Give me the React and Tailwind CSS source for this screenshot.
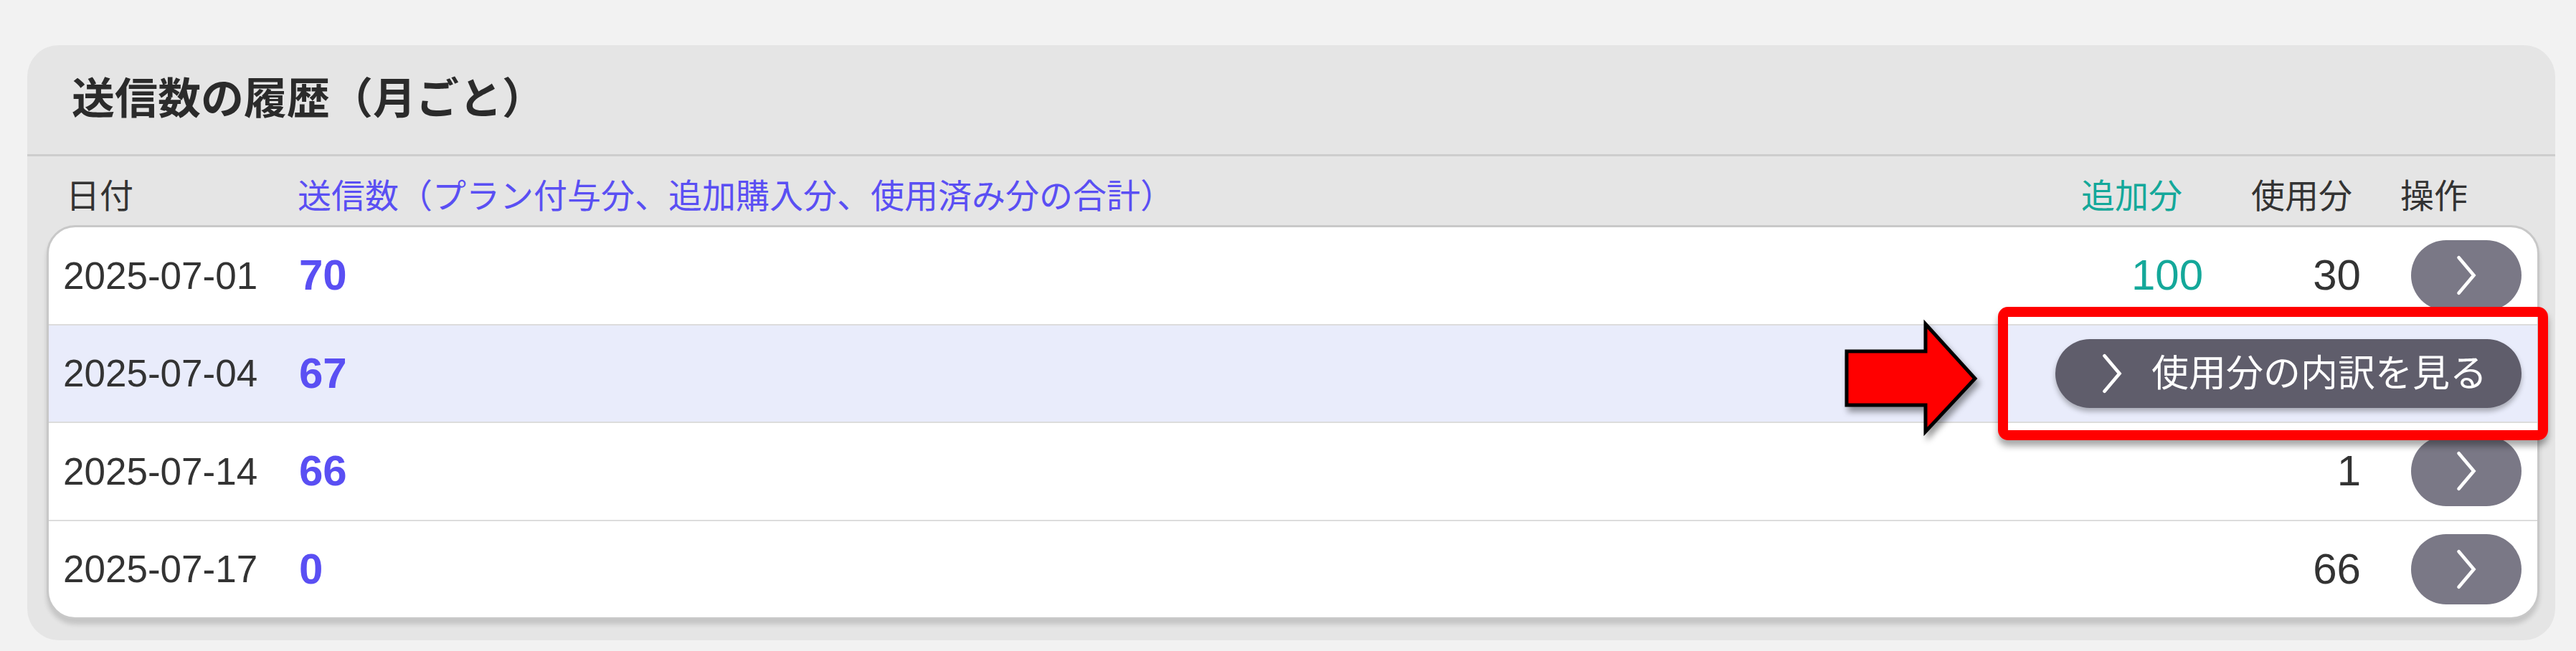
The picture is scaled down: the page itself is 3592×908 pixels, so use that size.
const rows = [
  { date: '2025-07-01', total: 70, added: 100, used: 30 },
  { date: '2025-07-04', total: 67, open: true },
  { date: '2025-07-14', total: 66, used: 1 },
  { date: '2025-07-17', total: 0, used: 66 },
];

const Chevron = ({ className }) => (
  <svg viewBox="0 0 40 62" className={className} fill="none" stroke="currentColor" strokeWidth="5" strokeLinecap="round" strokeLinejoin="miter">
    <path d="M9 5 L31 31 L9 57" />
  </svg>
);

export default function App() {
  return (
    <div className="relative w-[3592px] h-[908px] bg-[#f2f2f2] pt-[63px] pl-[38px] font-['Liberation_Sans','Noto_Sans_CJK_JP',sans-serif] text-[#333]">
      <div className="w-[3525px] h-[830px] bg-[#e5e5e5] rounded-[44px] flex flex-col">
        {/* title */}
        <div className="h-[155px] flex items-center pl-[62px] border-b-[3px] border-[#cdcdcd]">
          <h1 className="text-[60px] font-bold leading-none text-[#2b2b2b]">送信数の履歴（月ごと）</h1>
        </div>

        {/* column headings */}
        <div className="h-[96px] pt-[14px] flex items-center pl-[54px] pr-[122px] text-[47px] leading-none">
          <span className="w-[323px]">日付</span>
          <span className="flex-1 text-[#5a4ff3]">送信数（プラン付与分、追加購入分、使用済み分の合計）</span>
          <span className="text-[#14a89a]">追加分</span>
          <span className="ml-[96px]">使用分</span>
          <span className="ml-[67px]">操作</span>
        </div>

        {/* table */}
        <div className="ml-[27px] mr-[22px] h-[550px] bg-white border-[3px] border-[#c8c8c8] rounded-[40px] overflow-hidden flex flex-col shadow-[0_7px_6px_rgba(0,0,0,0.14)]">
          {rows.map((r, i) => (
            <div
              key={r.date}
              className={`flex-1 flex items-center pl-[20px] pr-[22px] ${i > 0 ? 'border-t-2 border-[#dcdcdc]' : ''} ${r.open ? 'bg-[#e9ecfb]' : ''}`}
            >
              <span className="w-[329px] text-[53px] leading-none">{r.date}</span>
              <span className="flex-1 text-[60px] font-bold leading-none text-[#5a4ff3]">{r.total}</span>
              {r.open ? (
                <button className="w-[650px] h-[96px] rounded-full bg-[#5f5d6b] text-white flex items-center pl-[60px] gap-[36px] shadow-[0_5px_7px_rgba(0,0,0,0.28)]">
                  <Chevron className="w-[38px] h-[60px]" />
                  <span className="text-[52px] leading-none">使用分の内訳を見る</span>
                </button>
              ) : (
                <>
                  <span className="w-[200px] text-right text-[60px] leading-none text-[#14a89a]">{r.added ?? ''}</span>
                  <span className="w-[220px] text-right text-[60px] leading-none">{r.used}</span>
                  <button className="ml-[70px] w-[154px] h-[98px] rounded-full bg-[#7a7886] text-white flex items-center justify-center">
                    <Chevron className="w-[38px] h-[60px]" />
                  </button>
                </>
              )}
            </div>
          ))}
        </div>
      </div>

      {/* annotation: red frame */}
      <div className="absolute left-[2786px] top-[428px] w-[767px] h-[186px] border-[14px] border-[#ff0000] rounded-[14px] shadow-[0_8px_10px_rgba(0,0,0,0.35)]" />

      {/* annotation: arrow */}
      <svg viewBox="0 0 196 170" className="absolute left-[2566px] top-[440px] w-[196px] h-[170px] drop-shadow-[4px_7px_4px_rgba(0,0,0,0.4)]">
        <polygon points="9,50 119,50 119,12 188,88 119,162 119,125 9,125" fill="#ff0000" stroke="#000" strokeWidth="5" strokeLinejoin="miter" />
      </svg>
    </div>
  );
}
